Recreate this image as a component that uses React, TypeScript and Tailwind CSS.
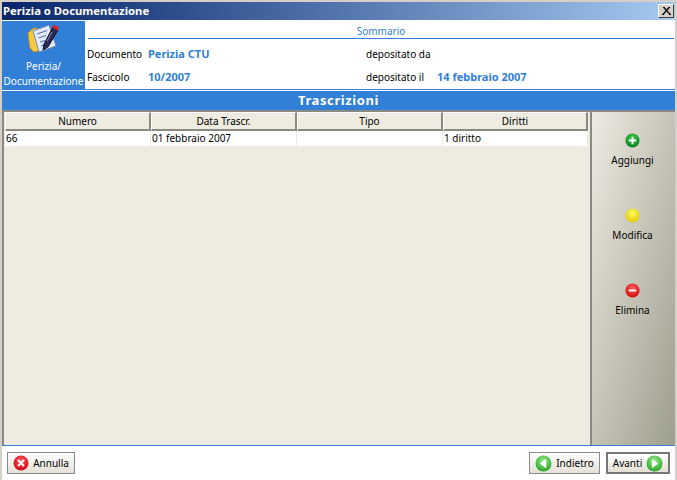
const font = { fontFamily: '"Noto Sans", sans-serif' };

function DocIcon() {
  return (
    <svg width="34" height="32" viewBox="0 0 34 32">
      <path d="M2 11 L8 6 L13 7 L24 5 L25 25 L8 30 L4 26 Z" fill="#f7c93e" stroke="#c4951c" strokeWidth="1" />
      <path d="M7 9 L23 3 L30 24 L13 30 Z" fill="#e3ebfa" stroke="#6f87bd" strokeWidth="1" />
      <path d="M11 12 L21 8.5 M12.5 16 L20 13.5 M14 20 L19 18.5 M15 24 L20 22.5" stroke="#4a6bb5" strokeWidth="1" />
      <path d="M18 22 L27 5 L32 8 L22 25 L17 28 Z" fill="#2a2a52" stroke="#12122a" strokeWidth="1" />
      <path d="M26.5 5.5 L31.5 8.5 L33 5.5 L28 2.5 Z" fill="#d8232a" />
      <path d="M21 19 L26 10" stroke="#8a8ac0" strokeWidth="1" />
    </svg>
  );
}

function Ball({ c1, c2, size = 15, children }: { c1: string; c2: string; size?: number; children?: React.ReactNode }) {
  const id = c1.replace('#', 'b') + size;
  return (
    <svg width={size} height={size} viewBox="0 0 16 16" className="shrink-0">
      <defs>
        <radialGradient id={id} cx="50%" cy="35%" r="70%">
          <stop offset="0%" stopColor={c1} />
          <stop offset="100%" stopColor={c2} />
        </radialGradient>
      </defs>
      <circle cx="8" cy="8" r="7.5" fill={`url(#${id})`} />
      {children}
    </svg>
  );
}

function SideAction({ label, c1, c2, mark }: { label: string; c1: string; c2: string; mark?: React.ReactNode }) {
  return (
    <div className="h-[75px] flex flex-col items-center">
      <Ball c1={c1} c2={c2}>{mark}</Ball>
      <span className="mt-[5px] leading-[15px] text-black">{label}</span>
    </div>
  );
}

function FootButton({ children, strong }: { children: React.ReactNode; strong?: boolean }) {
  return (
    <div
      className={`h-[22px] flex items-center justify-center gap-[4px] text-black bg-gradient-to-b from-[#ffffff] to-[#e4e0d6] ${
        strong ? 'border-2 border-[#77777a]' : 'border border-[#8a8a8a]'
      }`}
    >
      {children}
    </div>
  );
}

const cols = ['Numero', 'Data Trascr.', 'Tipo', 'Diritti'];
const row = ['66', '01 febbraio 2007', '', '1 diritto'];

export default function App() {
  return (
    <div style={font} className="w-[677px] h-[480px] bg-white text-[10px] flex flex-col overflow-hidden border-2 border-b-0 border-[#d4d0c8] box-border">
      <div className="h-[18px] shrink-0 flex items-center justify-between pl-[1px] pr-[1px] bg-gradient-to-r from-[#0a246a] to-[#a6caf0]">
        <span className="text-white font-bold text-[11.3px] leading-none">Perizia o Documentazione</span>
        <div className="w-[16px] h-[14px] bg-[#d4d0c8] border border-t-white border-l-white border-r-[#404040] border-b-[#404040] flex items-center justify-center">
          <svg width="9" height="8" viewBox="0 0 9 8"><path d="M1 0 L8 8 M2 0 L9 8 M8 0 L1 8 M7 0 L0 8" stroke="#000" strokeWidth="1" /></svg>
        </div>
      </div>

      <div className="h-[69px] shrink-0 flex bg-white mt-[1px]">
        <div className="w-[83px] shrink-0 bg-[#317fd6] flex flex-col items-center text-white leading-[14px]">
          <div className="mt-[1px] h-[37px] -ml-[2px]"><DocIcon /></div>
          <span>Perizia/</span>
          <span className="whitespace-nowrap mt-[1px]">Documentazione</span>
        </div>
        <div className="flex-1 flex flex-col pl-[2px] pr-[1px]">
          <div className="h-[18px] ml-[1px] border-b border-[#317fd6] text-center text-[#317fd6] leading-[20px]">Sommario</div>
          <div className="grid grid-cols-[61px_218px_71px_1fr] grid-rows-[23px_23px] items-center mt-[4px] text-black">
            <span>Documento</span>
            <span className="font-bold text-[11px] text-[#317fd6]">Perizia CTU</span>
            <span>depositato da</span>
            <span />
            <span>Fascicolo</span>
            <span className="font-bold text-[11px] text-[#317fd6]">10/2007</span>
            <span className="whitespace-nowrap">depositato il</span>
            <span className="font-bold text-[11px] text-[#317fd6]">14 febbraio 2007</span>
          </div>
        </div>
      </div>

      <div className="h-[1px] -mt-[1px] shrink-0 bg-[#317fd6]" />
      <div className="h-[1px] shrink-0 bg-white" />
      <div className="h-[19px] shrink-0 bg-[#317fd6] text-white font-bold text-[13px] tracking-[0.6px] leading-[19px] text-center">Trascrizioni</div>

      <div className="h-[335px] shrink-0 flex bg-[#eeebe0] border-t-2 border-[#8a8a84] border-l-2">
        <div className="flex-1 pl-[1px] pt-0 pr-[2px]">
          <div className="grid grid-cols-[146px_146px_146px_145px] w-[583px]">
            {cols.map((c) => (
              <div key={c} className="h-[19px] bg-[#eeebe0] border-t border-l border-t-white border-l-white border-b-2 border-r-2 border-b-[#8c8a80] border-r-[#8c8a80] text-center leading-[16px] text-black">{c}</div>
            ))}
            {row.map((c, i) => (
              <div key={i} className="h-[15px] bg-white border-r border-[#eeebe0] pl-[1px] leading-[15px] text-black whitespace-nowrap">{c}</div>
            ))}
          </div>
        </div>
        <div className="w-[85px] shrink-0 border-l-2 border-[#8a8a84] bg-gradient-to-br from-[#eeebe2] to-[#9e9e8e] flex flex-col pt-[21px] pr-[2px]">
          <SideAction label="Aggiungi" c1="#3fcf4f" c2="#007a1c" mark={<path d="M8 4 V12 M4 8 H12" stroke="#fff" strokeWidth="2" />} />
          <SideAction label="Modifica" c1="#fff95a" c2="#e0c800" />
          <SideAction label="Elimina" c1="#ff6060" c2="#d00000" mark={<path d="M4 8 H12" stroke="#fff" strokeWidth="2" />} />
        </div>
      </div>

      <div className="h-[1px] shrink-0 bg-[#317fd6]" />
      <div className="flex-1 flex items-start justify-between pt-[6px] pl-[5px] pr-[5px]">
        <div className="w-[68px]">
          <FootButton>
            <Ball c1="#ff5a5a" c2="#cc0010" size={16}><path d="M5 5 L11 11 M11 5 L5 11" stroke="#fff" strokeWidth="2" /></Ball>
            <span>Annulla</span>
          </FootButton>
        </div>
        <div className="flex gap-[6px]">
          <div className="w-[71px]">
            <FootButton>
              <Ball c1="#9af08a" c2="#1e9e22" size={17}><path d="M10.5 3.5 L4.5 8 L10.5 12.5 Z" fill="#fff" /></Ball>
              <span>Indietro</span>
            </FootButton>
          </div>
          <div className="w-[64px]">
            <FootButton strong>
              <span>Avanti</span>
              <Ball c1="#9af08a" c2="#1e9e22" size={17}><path d="M5.5 3.5 L11.5 8 L5.5 12.5 Z" fill="#fff" /></Ball>
            </FootButton>
          </div>
        </div>
      </div>
    </div>
  );
}
